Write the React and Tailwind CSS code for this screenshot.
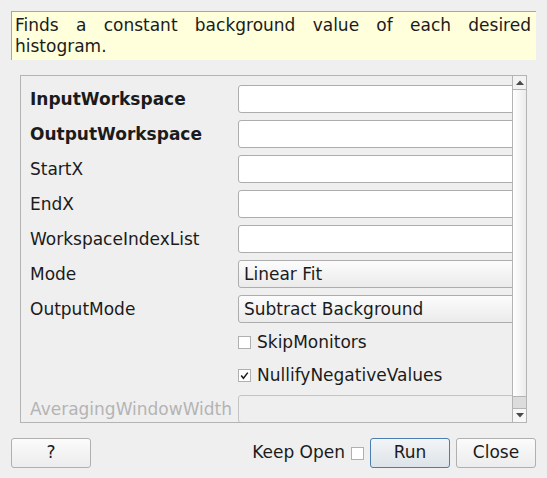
import React from "react";

function Label({ children, bold, disabled }) {
  return (
    <div
      className={
        "w-[208px] shrink-0 whitespace-nowrap pt-[2px] " +
        (bold ? "font-bold " : "") +
        (disabled ? "text-[#b4b4b4]" : "")
      }
    >
      {children}
    </div>
  );
}

function LineEdit() {
  return <div className="w-[300px] h-[28px] shrink-0 bg-white border border-[#adadad] rounded-[3px]" />;
}

function Combo({ value }) {
  return (
    <div className="w-[300px] h-[28px] shrink-0 border border-[#adadad] rounded-[3px] bg-gradient-to-b from-[#fcfcfc] to-[#ebebeb] flex items-center pl-[5px] pt-[2px] whitespace-nowrap">
      {value}
    </div>
  );
}

function Check({ checked }) {
  return (
    <div className="w-[13px] h-[13px] shrink-0 bg-white border border-[#b0b0b0] flex items-center justify-center">
      {checked && (
        <svg width="9" height="9" viewBox="0 0 9 9">
          <path d="M1.2 4.6 L3.4 7.2 L7.8 1.6" fill="none" stroke="#1b1b1b" strokeWidth="1.5" />
        </svg>
      )}
    </div>
  );
}

function Row({ children }) {
  return <div className="h-[28px] flex items-center">{children}</div>;
}

function Button({ children, primary }) {
  return (
    <div
      className={
        "w-[80px] h-[30px] shrink-0 rounded-[3px] border flex items-center justify-center " +
        (primary
          ? "border-[#4a7db0] bg-gradient-to-b from-[#f3f5f7] to-[#dde3e8]"
          : "border-[#b0b0b0] bg-gradient-to-b from-[#fbfbfb] to-[#ececec]")
      }
    >
      {children}
    </div>
  );
}

export default function App() {
  return (
    <div className="w-[547px] h-[478px] bg-[#efefef] font-['DejaVu_Sans',sans-serif] text-[17px] text-[#1b1b1b] overflow-hidden pt-[11px] px-[11px]">
      <div className="h-[49px] bg-[#ffffdc] border-t border-l border-[#a6a6a6] pl-[3px] pr-[5px] pt-[3px] leading-[21px]">
        <div className="text-justify [text-align-last:justify] whitespace-nowrap">
          Finds a constant background value of each desired
        </div>
        <div>histogram.</div>
      </div>

      <div className="mt-[15px] ml-[9px] w-[507px] h-[348px] border border-[#b4b4b4] flex">
        <div className="flex-1 overflow-hidden pt-[9px] pl-[9px] flex flex-col gap-[7px]">
          <Row>
            <Label bold>InputWorkspace</Label>
            <LineEdit />
          </Row>
          <Row>
            <Label bold>OutputWorkspace</Label>
            <LineEdit />
          </Row>
          <Row>
            <Label>StartX</Label>
            <LineEdit />
          </Row>
          <Row>
            <Label>EndX</Label>
            <LineEdit />
          </Row>
          <Row>
            <Label>WorkspaceIndexList</Label>
            <LineEdit />
          </Row>
          <Row>
            <Label>Mode</Label>
            <Combo value="Linear Fit" />
          </Row>
          <Row>
            <Label>OutputMode</Label>
            <Combo value="Subtract Background" />
          </Row>
          <Row>
            <Label></Label>
            <Check />
            <span className="ml-[6px] whitespace-nowrap">SkipMonitors</span>
          </Row>
          <Row>
            <Label></Label>
            <Check checked />
            <span className="ml-[6px] whitespace-nowrap">NullifyNegativeValues</span>
          </Row>
          <Row>
            <Label disabled>AveragingWindowWidth</Label>
            <div className="w-[300px] h-[28px] shrink-0 bg-[#efefef] border border-[#c4c4c4] rounded-[3px]" />
          </Row>
        </div>

        <div className="w-[14px] shrink-0 border-l border-[#b4b4b4] flex flex-col">
          <div className="h-[14px] shrink-0 border-b border-[#b4b4b4] bg-[#f2f2f2] flex items-center justify-center">
            <svg width="8" height="5" viewBox="0 0 8 5">
              <path d="M0 5 L4 0.5 L8 5 Z" fill="#4a4a4a" />
            </svg>
          </div>
          <div className="flex-1 border-b border-[#b4b4b4] bg-gradient-to-r from-[#ffffff] to-[#ececec]" />
          <div className="h-[11px] shrink-0 bg-[#dcdcdc]" />
          <div className="h-[14px] shrink-0 border-t border-[#b4b4b4] bg-[#f7f7f7] flex items-center justify-center">
            <svg width="8" height="5" viewBox="0 0 8 5">
              <path d="M0 0 L8 0 L4 4.5 Z" fill="#4a4a4a" />
            </svg>
          </div>
        </div>
      </div>

      <div className="mt-[15px] h-[30px] flex items-center">
        <Button>?</Button>
        <div className="flex-1" />
        <span className="whitespace-nowrap">Keep Open</span>
        <div className="ml-[6px]">
          <Check />
        </div>
        <div className="ml-[6px]">
          <Button primary>Run</Button>
        </div>
        <div className="ml-[6px]">
          <Button>Close</Button>
        </div>
      </div>
    </div>
  );
}
